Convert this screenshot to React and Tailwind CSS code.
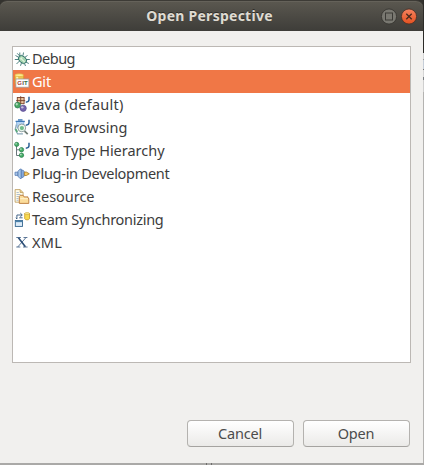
import React from "react";

const Svg = ({ children }) => (
  <svg width="16" height="16" viewBox="0 0 16 16" className="shrink-0 overflow-visible">
    {children}
  </svg>
);

const JMark = () => (
  <path d="M15 -.2V2.8Q14.9 5 11.8 5.2" fill="none" stroke="#2c6296" strokeWidth="1.5" />
);

const Ball = ({ x, y, r, fill, stroke }) => (
  <g>
    <circle cx={x} cy={y} r={r} fill={fill} stroke={stroke} strokeWidth="0.7" />
    <circle cx={x - r * 0.3} cy={y - r * 0.3} r={r * 0.4} fill="#fff" opacity="0.6" />
  </g>
);

const icons = {
  bug: (
    <Svg>
      <path d="M5.8 1.5v3.5M9.5 1.5l-.5 3M1.5 4.5l3.5 2M.8 8.5h4M2.5 13l3-3M6.5 14.8l1-3M13.5 4.5L10.5 6.5M15.8 8.5h-4M14.8 12.5L11.8 11M11.5 15l-1-2.5M3.2 2.3l2.8 3" stroke="#3d7674" strokeWidth="0.9" fill="none" />
      <ellipse cx="8.5" cy="8.5" rx="4.6" ry="3.3" transform="rotate(42 8.5 8.5)" fill="#a2d3ae" stroke="#2c6a68" strokeWidth="0.9" />
      <path d="M6.5 7l4.3 4.2M8.4 6.4L6.4 8.4" stroke="#e0f5dd" strokeWidth="1.1" />
    </Svg>
  ),
  git: (
    <Svg>
      <path d="M1 1.2v8.3q1 1.5 4.2 1.5t4.2-1.5V1.2z" fill="#eec550" stroke="#d7a528" strokeWidth="0.7" />
      <path d="M3.2 1v8" stroke="#fff3ae" strokeWidth="2" />
      <ellipse cx="5.2" cy="1.2" rx="4.2" ry="1.4" fill="#ffeb96" stroke="#dfb33a" strokeWidth="0.7" />
      <rect x="1.9" y="5" width="13" height="8.2" fill="#fff" stroke="#a09a98" strokeWidth="0.8" />
      <text x="3.3" y="11.2" fontSize="6" fontWeight="700" fontFamily="Liberation Sans, sans-serif" textLength="10.4" lengthAdjust="spacing">
        <tspan fill="#a83a34">G</tspan><tspan fill="#4f4545">I</tspan><tspan fill="#34703d">T</tspan>
      </text>
    </Svg>
  ),
  java: (
    <Svg>
      <rect x="3.3" y="0.5" width="6.8" height="6.2" fill="#ecc7a0" stroke="#79412b" strokeWidth="0.9" />
      <path d="M2.2 3.6h9M6.7 -.8V7" stroke="#79412b" strokeWidth="0.9" />
      <Ball x={3.6} y={8.1} r={2.9} fill="#48a764" stroke="#26784c" />
      <Ball x={9.2} y={11.3} r={3.1} fill="#7464ac" stroke="#54478e" />
      <JMark />
    </Svg>
  ),
  browsing: (
    <Svg>
      <path d="M2.4 1.5L3.2 8h6L10 1.5z" fill="#b6d5f4" stroke="#6c9fd2" strokeWidth="0.7" />
      <path d="M1.6 1.4h9.2M4 -.2h4.5" stroke="#3d79b8" strokeWidth="1.3" />
      <path d="M2.4 4.5L1.2 9.5l2.4 4.3h5.3" stroke="#8aa7b8" strokeWidth="1.2" fill="none" />
      <path d="M1.6 9l1.7 3" stroke="#55a974" strokeWidth="1.6" />
      <path d="M10.3 10.8l3.4 3.4" stroke="#6f7c74" strokeWidth="1.7" />
      <circle cx="7.8" cy="7.9" r="3.9" fill="#eef8f0" stroke="#87979a" strokeWidth="0.9" />
      <circle cx="7.9" cy="8.1" r="2.1" fill="#70bd8b" />
      <JMark />
    </Svg>
  ),
  hierarchy: (
    <Svg>
      <path d="M2.5 2v10.5H6M2.5 6.8H6" stroke="#6c777c" strokeWidth="1" fill="none" />
      <Ball x={2.7} y={1.4} r={2.1} fill="#45ac66" stroke="#2a7f4c" />
      <Ball x={7.5} y={6.7} r={2.2} fill="#45ac66" stroke="#2a7f4c" />
      <Ball x={7.5} y={12.2} r={2.2} fill="#45ac66" stroke="#2a7f4c" />
      <JMark />
    </Svg>
  ),
  plugin: (
    <Svg>
      <path d="M1 6.2h3v3.2H1z" fill="#a9c5e8" stroke="#5b80b6" strokeWidth="0.8" />
      <path d="M4 5.3L6 3.1h1.3v9.4H6L4 10.3z" fill="#a9c7e8" stroke="#5379b2" strokeWidth="0.8" />
      <path d="M7.3 4.2h1.8l1.1 1.4v4.4l-1.1 1.4H7.3z" fill="#86aadb" stroke="#5379b2" strokeWidth="0.8" />
      <path d="M10.4 6.1h2l2.9 1.7-2.9 1.7h-2z" fill="#f5ca62" stroke="#ab8032" strokeWidth="0.9" />
    </Svg>
  ),
  resource: (
    <Svg>
      <path d="M1.1.6h5.1l2.9 2.9V13.2h-8z" fill="#fffbe8" stroke="#b99756" strokeWidth="0.8" />
      <path d="M6.1.7v2.8H9" fill="#e5c986" stroke="#b99756" strokeWidth="0.7" />
      <path d="M2.5 3.5h2.3M2.5 5.5h4M2.5 7.5h2.3M2.5 9.5h2M2.5 11.3h2" stroke="#9aafc9" strokeWidth="0.8" />
      <path d="M5.3 14.4V7.5l1-1.2h2.8l1 1.6h3.9v1.6h.8v4.9z" fill="#fbdc9a" stroke="#b9783a" strokeWidth="0.9" />
      <path d="M6.2 9.7h7.8" stroke="#fff3cf" strokeWidth="1" />
    </Svg>
  ),
  team: (
    <Svg>
      <path d="M2.9 7V3h5M6.3 1.1l2 1.9-2 1.8M8.6 5.8H5.2M2.9 7l-1-1.3" fill="none" stroke="#34587f" strokeWidth="0.9" />
      <rect x="1.3" y="8.5" width="7.2" height="5.9" fill="#dcebf8" stroke="#34668e" strokeWidth="0.9" />
      <path d="M1.3 9.4h7.2" stroke="#4a80aa" strokeWidth="1.5" />
      <path d="M10.7 1.5v5.2q.7 1.2 2.4 1.2t2.4-1.2V1.5z" fill="#f8d94e" stroke="#c79b25" strokeWidth="0.8" />
      <ellipse cx="13.1" cy="1.5" rx="2.4" ry="0.9" fill="#fff1a0" stroke="#c79b25" strokeWidth="0.6" />
    </Svg>
  ),
  xml: (
    <Svg>
      <path d="M2.3 2.5h4.6M9.5 2.5h3.9M2.3 12h4M9 12h4.6M11.9 2.7L3.8 11.9" stroke="#35577f" strokeWidth="0.8" fill="none" />
      <path d="M4.4 2.7l7 9.1" stroke="#294c75" strokeWidth="1.6" />
    </Svg>
  ),
};

const rows = [
  ["bug", "Debug", 43],
  ["git", "Git", 19],
  ["java", "Java (default)", 91.5],
  ["browsing", "Java Browsing", 95.5],
  ["hierarchy", "Java Type Hierarchy", 132.5],
  ["plugin", "Plug-in Development", 137.5],
  ["resource", "Resource", 62.5],
  ["team", "Team Synchronizing", 131.5],
  ["xml", "XML", 30],
];

// Text stretched or condensed to a fixed advance width.
function FitText({ width, children }) {
  const ref = React.useRef(null);
  const [spacing, setSpacing] = React.useState(0);
  React.useLayoutEffect(() => {
    const natural = ref.current.getBoundingClientRect().width;
    setSpacing((width - natural) / children.length);
  }, []);
  return (
    <span ref={ref} className="whitespace-nowrap" style={{ letterSpacing: spacing + "px" }}>
      {children}
    </span>
  );
}

const Button = ({ label, width }) => (
  <button className="flex h-[27px] w-[107px] items-center justify-center rounded-[4px] border border-[#b4b2af] border-b-[#a5a3a0] bg-linear-to-b from-white to-[#ebeae8] pr-px pb-px text-[14.5px] leading-none text-[#4c4c4c]">
    <FitText width={width}>{label}</FitText>
  </button>
);

export default function App() {
  return (
    <div className="flex h-[465px] w-[424px] flex-col overflow-hidden bg-[#aaa9a7] font-['Noto_Sans','Open_Sans',sans-serif]">
      <div className="flex h-[463px]">
        <div className="flex w-[423px] flex-col bg-[#f1f0ee]">
          <header className="h-[31px] bg-[#33322e]">
            <div className="flex h-[31px] items-center rounded-t-[7px] border-t border-[#3d3b36] bg-linear-to-b from-[#5b5850] to-[#3e3d39] pr-[6px] pl-[38px] shadow-[inset_0_1px_0_#65625a]">
              <h1 className="flex-1 text-center text-[14px] leading-none font-bold text-[#dfdbd2] [text-shadow:0_-1px_0_#2e2d29]">
                <FitText width={126.5}>Open Perspective</FitText>
              </h1>
              <div className="flex gap-1">
                <svg width="16" height="17" viewBox="0 0 16 17">
                  <circle cx="8" cy="8.5" r="7.6" fill="#797871" stroke="#383732" strokeWidth="0.9" />
                  <rect x="4.5" y="5" width="7" height="7" fill="none" stroke="#3c3b37" />
                </svg>
                <svg width="16" height="17" viewBox="0 0 16 17">
                  <defs>
                    <linearGradient id="close" x2="0" y2="1">
                      <stop stopColor="#f58360" />
                      <stop offset="1" stopColor="#e3501f" />
                    </linearGradient>
                  </defs>
                  <circle cx="8" cy="8.5" r="7.6" fill="url(#close)" stroke="#4b3329" strokeWidth="0.9" />
                  <path d="M5.3 5.8l5.4 5.4M10.7 5.8l-5.4 5.4" stroke="#4a2b1e" strokeWidth="1.3" />
                </svg>
              </div>
            </div>
          </header>
          <main className="flex flex-1 flex-col pt-[15px] pr-3 pl-3">
            <ul className="h-[317px] w-[399px] border border-[#bcb8b4] bg-white">
              {rows.map(([icon, label, width]) => (
                <li
                  key={label}
                  className={`flex h-[23px] items-center gap-[2px] pl-px text-[14.5px] leading-none ${
                    icon === "git" ? "bg-[#f07746] text-white" : "text-[#3c3c3c]"
                  }`}
                >
                  {icons[icon]}
                  <FitText width={width}>{label}</FitText>
                </li>
              ))}
            </ul>
            <div className="mt-[57px] flex justify-end gap-[9px] pr-px">
              <Button label="Cancel" width={44} />
              <Button label="Open" width={36.5} />
            </div>
          </main>
        </div>
        <div className="flex w-px flex-col bg-[#b4b3b1]">
          <div className="h-[53px] bg-[#2c2b28]" />
          <div className="h-[6px] bg-[#d5d5d5]" />
          <div className="h-px bg-[#999]" />
          <div className="h-[9px] bg-[#c6ced8]" />
          <div className="h-px bg-[#777]" />
          <div className="h-[7px] bg-[#d5d5d5]" />
          <div className="h-[3px] bg-[#7c8084]" />
          <div className="h-[12px] bg-[#cfcfcf]" />
        </div>
      </div>
      <div className="flex h-[2px] gap-1 pl-[206px]">
        <div className="w-px bg-[#6f6e6c]" />
        <div className="w-px bg-[#6f6e6c]" />
      </div>
    </div>
  );
}
